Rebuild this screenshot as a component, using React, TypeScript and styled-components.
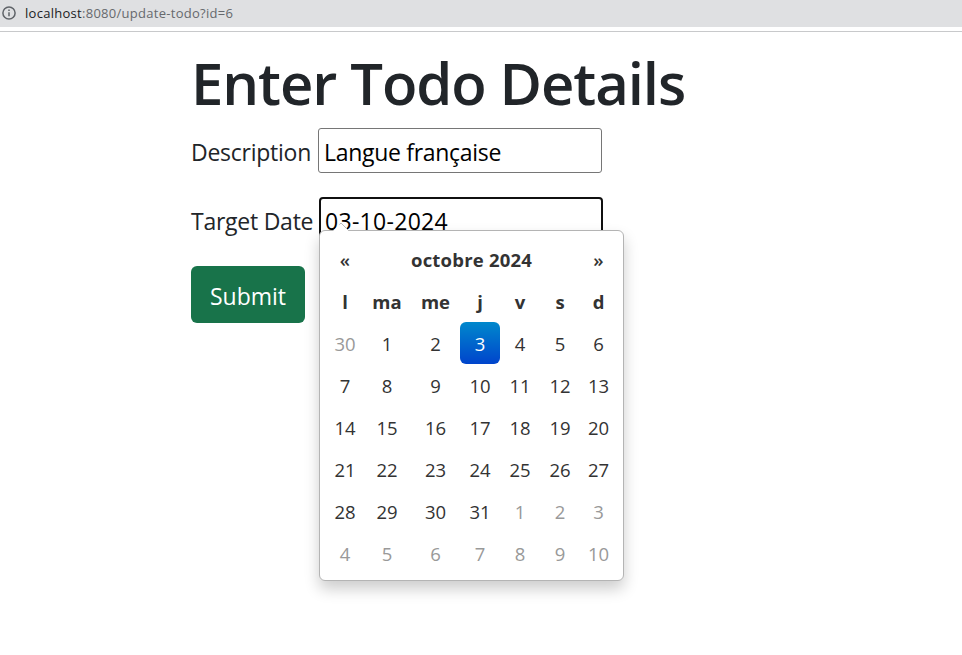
import React from "react";
import styled, { createGlobalStyle, css } from "styled-components";

const GlobalStyle = createGlobalStyle`
  *, *::before, *::after { box-sizing: border-box; }
  body {
    margin: 0;
    background: #fff;
    color: #212529;
    font-family: "Open Sans", "Noto Sans", sans-serif;
  }
`;

const AddressBar = styled.header`
  display: flex;
  align-items: center;
  height: 27px;
  padding: 0 2px 1px;
  gap: 9px;
  background: #dfe0e2;
`;

const Url = styled.span`
  font-size: 13px;
  line-height: 25px;
  letter-spacing: 0.28px;
  color: #66696d;
  b { font-weight: 400; color: #202124; }
`;

const Divider = styled.div`
  height: 5px;
  border-bottom: 1px solid #c8c9cb;
`;

const Container = styled.main`
  display: flex;
  flex-direction: column;
  align-items: flex-start;
  min-height: 623px;
  padding: 18px 0 0 191px;
`;

const Title = styled.h1`
  margin: 0;
  height: 78px;
  font-size: 58px;
  line-height: 65px;
  font-weight: 600;
  letter-spacing: -1.08px;
  white-space: nowrap;
`;

const Field = styled.div<{ $height: number; $gap: number }>`
  position: relative;
  display: flex;
  align-items: center;
  height: ${(p) => p.$height}px;
  margin-bottom: ${(p) => p.$gap}px;
`;

const Label = styled.label<{ $width: number }>`
  width: ${(p) => p.$width}px;
  font-size: 23px;
  letter-spacing: -0.25px;
  line-height: 36px;
  padding-top: 2px;
  white-space: nowrap;
`;

const Input = styled.input<{ $active?: boolean }>`
  width: 284px;
  height: 100%;
  padding: 2px 5px 0;
  border: 1px solid #767676;
  border-radius: 3px;
  outline: none;
  background: #fff;
  color: #000;
  font: 400 23px "Open Sans", "Noto Sans", sans-serif;
  letter-spacing: -0.3px;
  ${(p) => p.$active && css`
    padding: 1px 4px 0;
    border: 2px solid #101010;
    border-radius: 4px;
    letter-spacing: 0.3px;
  `}
`;

const Submit = styled.button`
  width: 114px;
  height: 57px;
  padding: 3px 0 0;
  border: 0;
  border-radius: 6px;
  background: #18734a;
  color: #fff;
  font: 400 23px "Open Sans", "Noto Sans", sans-serif;
`;

const Picker = styled.section`
  position: absolute;
  z-index: 1;
  left: 128px;
  top: 33px;
  width: 305px;
  height: 351px;
  padding: 7px;
  border: 1px solid #b4b4b4;
  border-radius: 6px;
  background: #fff;
  box-shadow: 0 8px 15px rgba(0, 0, 0, 0.2);
`;

const Arrow = styled.svg`
  position: absolute;
  left: 11px;
  top: -10px;
`;

const Grid = styled.div`
  display: grid;
  grid-template-columns: 36px 48px 49px 40px 40px 40px 37px;
  grid-auto-rows: 42px;
  color: #333;
  font-size: 18.5px;
  line-height: 43px;
  text-align: center;
`;

const Head = styled.div<{ $span?: number }>`
  grid-column: span ${(p) => p.$span ?? 1};
  font-weight: 700;
`;

const MonthName = styled(Head)`
  letter-spacing: 0.2px;
`;

const Step = styled(Head)`
  font-weight: 600;
`;

const Day = styled.div<{ $muted?: boolean; $selected?: boolean }>`
  border-radius: 6px;
  color: ${(p) => (p.$muted ? "#999" : "#333")};
  ${(p) => p.$selected && css`
    color: #fff;
    background: linear-gradient(#0088cc, #0044cc);
  `}
`;

const days = [30, ...Array.from({ length: 31 }, (_, i) => i + 1), 1, 2, 3, 4, 5, 6, 7, 8, 9, 10];

export default function App() {
  return (
    <>
      <GlobalStyle />
      <AddressBar>
        <svg width="14" height="14" viewBox="0 0 14 14" fill="none" stroke="#5f6368" strokeWidth="1.5">
          <circle cx="7" cy="7" r="6.1" />
          <path d="M7 6.2v4M7 3.6v1.5" />
        </svg>
        <Url><b>localhost</b>:8080/update-todo?id=6</Url>
      </AddressBar>
      <Divider />
      <Container>
        <Title>Enter Todo Details</Title>
        <Field $height={45} $gap={24}>
          <Label $width={127}>Description</Label>
          <Input defaultValue="Langue française" />
        </Field>
        <Field $height={46} $gap={23}>
          <Label $width={128}>Target Date</Label>
          <Input $active defaultValue="03-10-2024" />
          <Picker>
            <Arrow width="20" height="11" viewBox="0 0 20 11">
              <path d="M1 11 10 2 19 11Z" fill="#fff" />
              <path d="M8.5 3.5 10 2 18 10" fill="none" stroke="#bbb" />
            </Arrow>
            <Grid>
              <Step>«</Step>
              <MonthName $span={5}>octobre 2024</MonthName>
              <Step>»</Step>
              {["l", "ma", "me", "j", "v", "s", "d"].map((d) => <Head key={d}>{d}</Head>)}
              {days.map((d, i) => (
                <Day key={i} $muted={i === 0 || i > 31} $selected={i === 3}>{d}</Day>
              ))}
            </Grid>
          </Picker>
        </Field>
        <Submit>Submit</Submit>
      </Container>
    </>
  );
}
